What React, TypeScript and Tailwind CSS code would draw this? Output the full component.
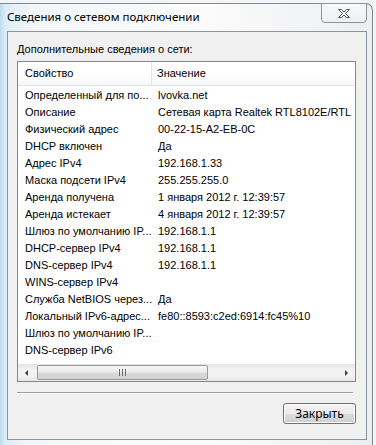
import React from "react";

const rows: [string, string][] = [
  ["Определенный для по...", "lvovka.net"],
  ["Описание", "Сетевая карта Realtek RTL8102E/RTL"],
  ["Физический адрес", "00-22-15-A2-EB-0C"],
  ["DHCP включен", "Да"],
  ["Адрес IPv4", "192.168.1.33"],
  ["Маска подсети IPv4", "255.255.255.0"],
  ["Аренда получена", "1 января 2012 г. 12:39:57"],
  ["Аренда истекает", "4 января 2012 г. 12:39:57"],
  ["Шлюз по умолчанию IP...", "192.168.1.1"],
  ["DHCP-сервер IPv4", "192.168.1.1"],
  ["DNS-сервер IPv4", "192.168.1.1"],
  ["WINS-сервер IPv4", ""],
  ["Служба NetBIOS через...", "Да"],
  ["Локальный IPv6-адрес...", "fe80::8593:c2ed:6914:fc45%10"],
  ["Шлюз по умолчанию IP...", ""],
  ["DNS-сервер IPv6", ""],
];

function CloseGlyph() {
  return (
    <svg width="14" height="11" viewBox="0 0 14 11">
      <path
        d="M1.5 1.5h3l2.5 2.5 2.5-2.5h3l-4 4 4 4h-3l-2.5-2.5-2.5 2.5h-3l4-4z"
        fill="#ffffff"
        stroke="#4b5563"
        strokeWidth="1"
        strokeLinejoin="round"
      />
    </svg>
  );
}

function ScrollBar() {
  return (
    <div className="h-[17px] flex items-center bg-[linear-gradient(180deg,#e3e3e3,#f2f2f2_30%,#f2f2f2_70%,#e6e6e6)]">
      <div className="w-[17px] h-full flex items-center justify-center">
        <div className="w-0 h-0 border-y-[3px] border-y-transparent border-r-[3px] border-r-[#3c3c3c]" />
      </div>
      <div className="ml-[2px] w-[171px] h-[15px] rounded-[2px] border border-[#9a9a9a] bg-[linear-gradient(180deg,#f6f6f6,#ebebeb_45%,#dadada_55%,#d0d0d0)] flex items-center justify-center gap-[2px]">
        <div className="w-px h-[7px] bg-[#6a6a6a]" />
        <div className="w-px h-[7px] bg-[#6a6a6a]" />
        <div className="w-px h-[7px] bg-[#6a6a6a]" />
      </div>
      <div className="flex-1" />
      <div className="w-[17px] h-full flex items-center justify-center">
        <div className="w-0 h-0 border-y-[3px] border-y-transparent border-l-[3px] border-l-[#3c3c3c]" />
      </div>
    </div>
  );
}

export default function App() {
  return (
    <div className="w-[376px] h-[445px] overflow-hidden bg-[#f3f5f6] pt-[3px] text-black">
      <div className="w-[373px] h-[442px] rounded-tr-[7px] border-t border-r border-[#7d8791] bg-[linear-gradient(90deg,#b9dcee_0px,#dcedf6_5px,#f3f6f8_30px,#fbfbfb_55%,#eceef0_100%)] flex flex-col">
        {/* title bar */}
        <div className="h-[27px] flex justify-between items-start">
          <span className="pl-[7px] pt-[5px] text-[11.5px] leading-[16px] font-['Noto_Sans',sans-serif]">
            Сведения о сетевом подключении
          </span>
          <div className="mr-[5px] -mt-px w-[46px] h-[20px] rounded-b-[4px] border border-[#8a929b] bg-[linear-gradient(180deg,#f8f8f8,#eef0f2)] flex items-center justify-center">
            <CloseGlyph />
          </div>
        </div>

        {/* client area */}
        <div className="ml-[7px] w-[360px] h-[409px] border border-[#8c939b] bg-[#f0f0f0] flex flex-col font-['Liberation_Sans',sans-serif]">
          <div className="pl-[9px] pt-[10px] text-[11px] leading-[14px]">
            Дополнительные сведения о сети:
          </div>

          <div className="ml-[9px] mt-[5px] w-[339px] h-[321px] border border-[#828790] bg-white flex flex-col overflow-hidden">
            <div className="h-[24px] flex border-b border-[#e3e5e8] bg-[linear-gradient(180deg,#ffffff,#ffffff_50%,#f6f7f9)] text-[11px]">
              <div className="w-[134px] pl-[7px] flex items-center border-r border-[#e2e4e7]">
                Свойство
              </div>
              <div className="pl-[5px] flex items-center">Значение</div>
            </div>
            <div className="pt-[1px]">
              {rows.map(([k, v], i) => (
                <div key={i} className="h-[17px] flex items-center text-[11px] whitespace-nowrap">
                  <div className="w-[135px] shrink-0 pl-[7px] overflow-hidden">{k}</div>
                  <div className="pl-[5px]">{v}</div>
                </div>
              ))}
            </div>
            <div className="flex-1" />
            <ScrollBar />
          </div>

          <div className="ml-[9px] mt-[10px] w-[336px] border-t border-[#a0a0a0] border-b border-b-white" />

          <div className="mt-[9px] flex justify-end pr-[10px]">
            <button className="w-[73px] h-[21px] rounded-[3px] border border-[#707070] bg-[linear-gradient(180deg,#f2f2f2,#ebebeb_50%,#dddddd_50%,#cfcfcf)] text-[12px] leading-none font-['Noto_Sans',sans-serif] shadow-[inset_0_0_0_1px_#fcfcfc]">
              Закрыть
            </button>
          </div>
        </div>
      </div>
    </div>
  );
}
